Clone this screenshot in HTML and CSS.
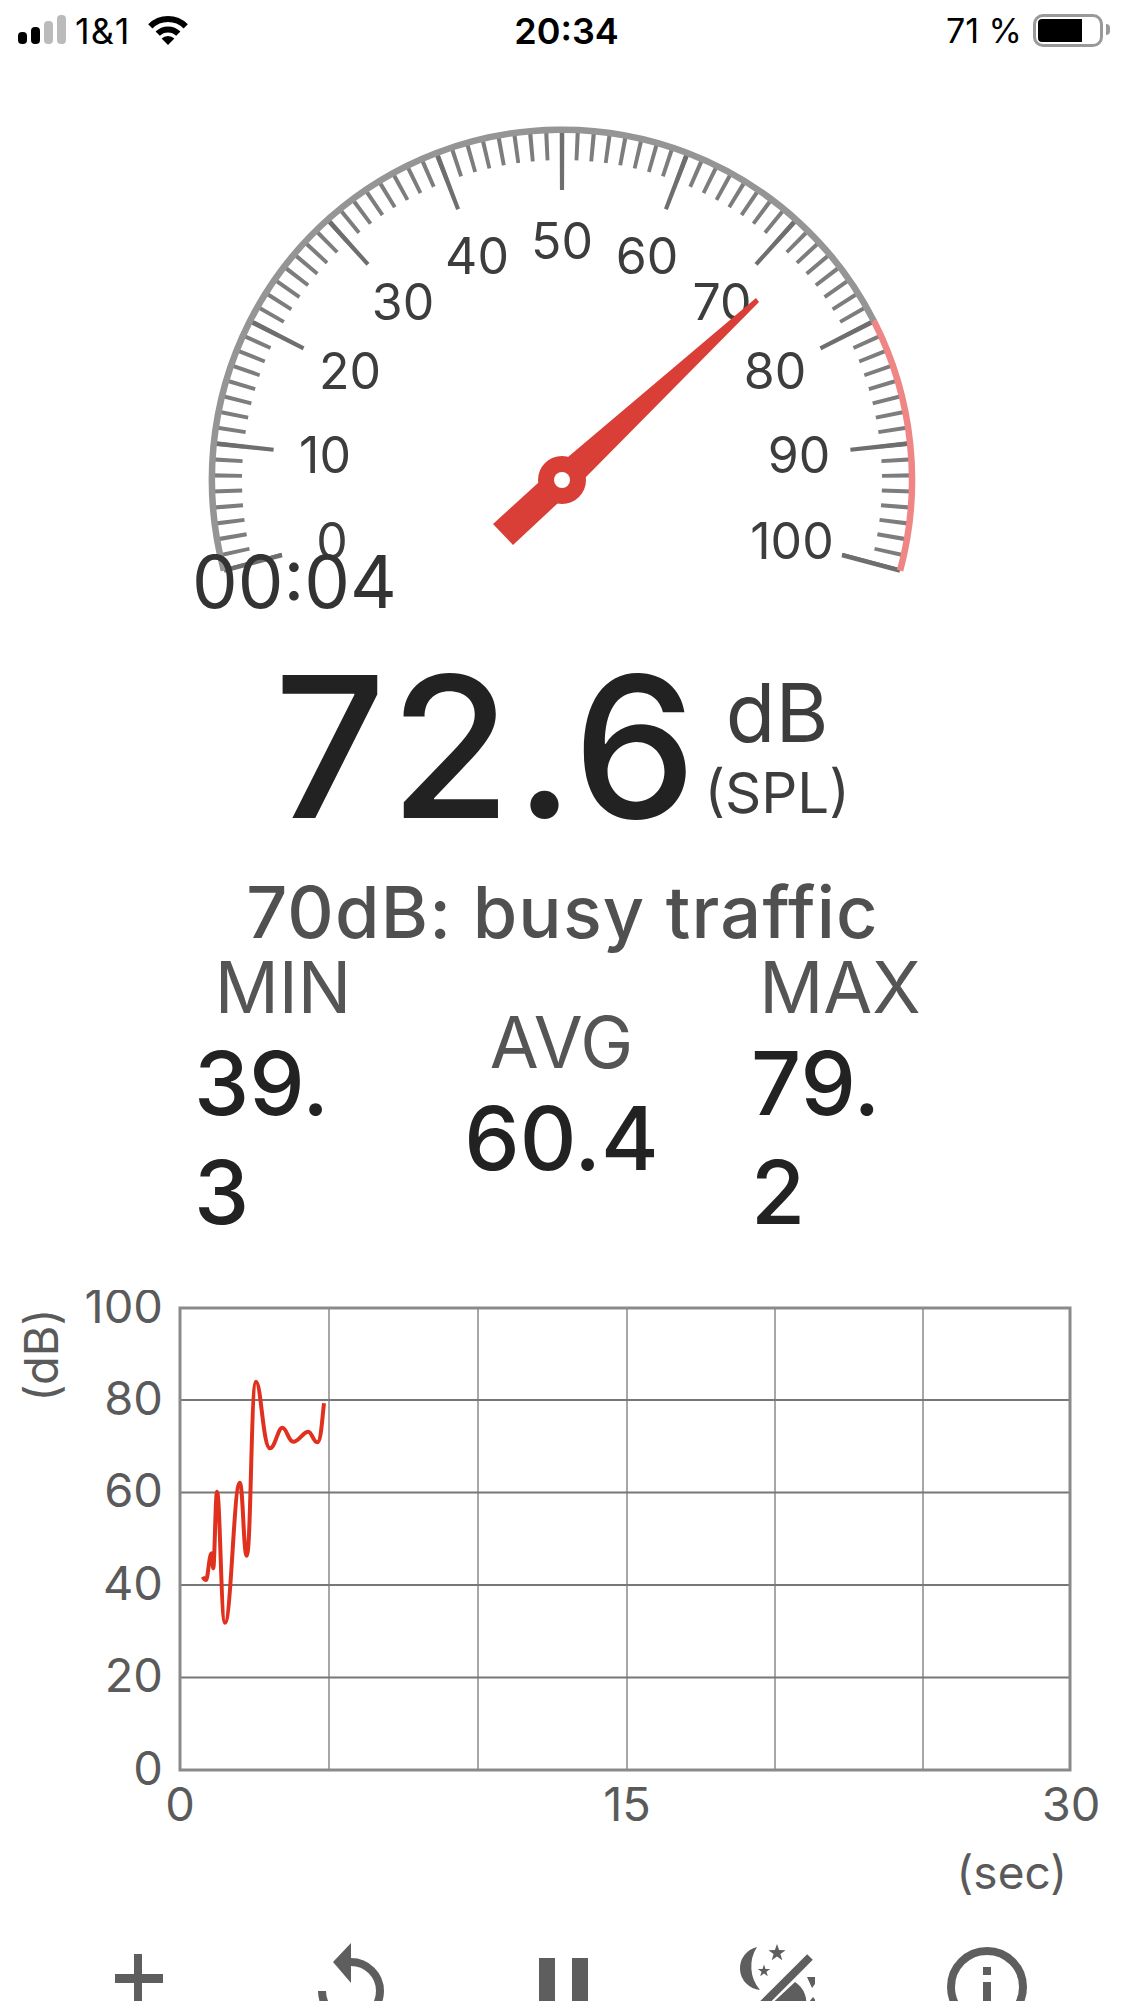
FILE: index.html
```html
<!DOCTYPE html>
<html lang="en">
<head>
    <meta charset="utf-8">
    <title>Sound Meter</title>
    <link rel="stylesheet" href="styles.css">
</head>
<body>
    <div class="status">
        <div class="status-left">
            <div class="signal"><i class="on b1"></i><i class="on b2"></i><i class="b3"></i><i class="b4"></i></div>
            <span class="carrier">1&amp;1</span>
            <svg class="wifi" viewBox="0 0 42 30" width="42" height="30">
                <path class="wifi-arc" d="M3.3 11.3 A25 25 0 0 1 38.7 11.3"/>
                <path class="wifi-arc" d="M10.7 18.7 A14.5 14.5 0 0 1 31.3 18.7"/>
                <path d="M21 30 L14.6 23.6 A9 9 0 0 1 27.4 23.6 Z"/>
            </svg>
        </div>
        <span class="clock">20:34</span>
        <div class="status-right">
            <span class="percent">71 %</span>
            <div class="battery"><div class="battery-fill"></div></div>
            <div class="battery-nub"></div>
        </div>
    </div>

    <svg class="gauge" viewBox="0 70 1125 530" width="1125" height="530">
        <path class="tick-minor" pathLength="80" d="M238.4 566.7 A335 335 0 1 1 885.6 566.7"/>
        <path class="tick-major" pathLength="10" d="M252.9 562.8 A320 320 0 1 1 871.1 562.8"/>
        <line class="tick-end" x1="282" y1="555" x2="224" y2="570.6"/>
        <line class="tick-end" x1="842" y1="555" x2="900" y2="570.6"/>
        <path class="arc" d="M223.9 570.6 A350 350 0 0 1 873.9 321.1"/>
        <path class="arc arc-hot" d="M873.9 321.1 A350 350 0 0 1 900.1 570.6"/>
        <text class="dial" x="332" y="559">0</text>
        <text class="dial" x="325" y="473">10</text>
        <text class="dial" x="350" y="389">20</text>
        <text class="dial" x="403" y="320">30</text>
        <text class="dial" x="477" y="274">40</text>
        <text class="dial" x="562" y="259">50</text>
        <text class="dial" x="647" y="274">60</text>
        <text class="dial" x="722" y="320">70</text>
        <text class="dial" x="775" y="389">80</text>
        <text class="dial" x="799" y="473">90</text>
        <text class="dial" x="792" y="559">100</text>
        <polygon class="needle" points="756,298 759,302 586,477 558,503 513,545 493,524 538,483 568,457"/>
        <circle class="needle" cx="562" cy="480" r="24"/>
        <circle class="hub" cx="562" cy="480" r="8"/>
    </svg>

    <div class="timer">00:04</div>

    <div class="reading">
        <div class="level">72.6</div>
        <div class="unit">
            <div class="unit-db">dB</div>
            <div class="unit-spl">(SPL)</div>
        </div>
    </div>

    <div class="hint">70dB: busy traffic</div>

    <div class="stats">
        <div class="stat">
            <div class="stat-label">MIN</div>
            <div class="stat-value">39.3</div>
        </div>
        <div class="stat stat-mid">
            <div class="stat-label">AVG</div>
            <div class="stat-value">60.4</div>
        </div>
        <div class="stat">
            <div class="stat-label">MAX</div>
            <div class="stat-value">79.2</div>
        </div>
    </div>

    <svg class="chart" viewBox="0 1290 1125 620" width="1125" height="620">
        <g class="grid-v">
            <line x1="329" y1="1308" x2="329" y2="1770"/>
            <line x1="478" y1="1308" x2="478" y2="1770"/>
            <line x1="627" y1="1308" x2="627" y2="1770"/>
            <line x1="775" y1="1308" x2="775" y2="1770"/>
            <line x1="923" y1="1308" x2="923" y2="1770"/>
        </g>
        <g class="grid-h">
            <line x1="180" y1="1400" x2="1070" y2="1400"/>
            <line x1="180" y1="1492.5" x2="1070" y2="1492.5"/>
            <line x1="180" y1="1585" x2="1070" y2="1585"/>
            <line x1="180" y1="1677.5" x2="1070" y2="1677.5"/>
        </g>
        <rect class="frame" x="180" y="1308" width="890" height="462"/>
        <text class="axis axis-y" x="163" y="1323">100</text>
        <text class="axis axis-y" x="163" y="1415">80</text>
        <text class="axis axis-y" x="163" y="1507">60</text>
        <text class="axis axis-y" x="163" y="1600">40</text>
        <text class="axis axis-y" x="163" y="1692">20</text>
        <text class="axis axis-y" x="163" y="1785">0</text>
        <text class="axis axis-x" x="180" y="1821">0</text>
        <text class="axis axis-x" x="627" y="1821">15</text>
        <text class="axis axis-x" x="1071" y="1821">30</text>
        <text class="axis axis-sec" x="1067" y="1889">(sec)</text>
        <text class="axis axis-db" transform="translate(58 1355) rotate(-90)">(dB)</text>
        <path class="trace" d="M202.7 1576.7 C204 1579 205 1580 206 1580 C208 1580 209 1553.3 211.7 1553.3 C212.3 1553.3 212.6 1568.3 213.3 1568.3 C214.5 1568.3 215.5 1491.7 217 1491.7 C220 1491.7 221 1622.7 225 1622.7 C231 1622.7 234 1482.7 239.7 1482.7 C243 1482.7 243.5 1555.7 246.7 1555.7 C251 1555.7 251 1381.7 256 1381.7 C261 1381.7 263 1448.3 270 1448.3 C275 1448.3 278 1427.7 282.3 1427.7 C287 1427.7 288 1441.7 293.3 1441.7 C299 1441.7 303 1431.7 308.3 1431.7 C312 1431.7 313 1442.3 317.3 1442.3 C321 1442.3 322 1420 324 1403.3"/>
    </svg>

    <div class="toolbar">
        <svg class="tool" viewBox="0 0 80 80" width="80" height="80">
            <rect x="35" y="14" width="8" height="66"/>
            <rect x="16" y="34" width="48" height="9"/>
        </svg>
        <svg class="tool" viewBox="0 0 80 80" width="80" height="80">
            <polygon points="22,22 40,3 40,43"/>
            <path class="tool-line" d="M40 22 A29 29 0 1 1 11 51"/>
        </svg>
        <svg class="tool" viewBox="0 0 80 80" width="80" height="80">
            <rect x="16" y="18" width="16" height="62"/>
            <rect x="49" y="18" width="16" height="62"/>
        </svg>
        <svg class="tool" viewBox="0 0 80 80" width="80" height="80">
            <path d="M22 7 A21.8 21.8 0 0 0 25 50 A36 36 0 0 1 22 7 Z"/>
            <polygon id="star" points="42,4 44.1,10.1 50.6,10.2 45.4,14.1 47.3,20.3 42,16.6 36.7,20.3 38.6,14.1 33.4,10.2 39.9,10.1"/>
            <use href="#star" transform="translate(29 31) scale(.72) translate(-42 -13)"/>
            <line class="tool-line" x1="75" y1="17" x2="20" y2="72"/>
            <path d="M60 42 A24 24 0 0 1 70 70 L30 70 Z"/>
            <polygon points="72,37 85,37 77,48"/>
            <polygon points="78,57 82,62 74,62"/>
        </svg>
        <svg class="tool" viewBox="0 0 80 80" width="80" height="80">
            <circle class="tool-line" cx="40" cy="47" r="36"/>
            <rect x="36" y="27" width="8" height="8"/>
            <rect x="36" y="42" width="8" height="30"/>
        </svg>
    </div>
</body>
</html>
```

FILE: styles.css
```css
html, body { margin: 0; padding: 0; background: #fff; }
body { width: 1125px; height: 2001px; overflow: hidden; font-family: Inter, "Liberation Sans", sans-serif; }
svg { display: block; }

/* status bar */
.status { display: grid; grid-template-columns: 1fr auto 1fr; height: 56px; padding: 14px 15px 0 18px; color: #000; font-size: 34px; line-height: 34px; }
.status-left { display: flex; align-items: flex-start; }
.status-right { display: flex; align-items: flex-start; justify-content: flex-end; }
.signal { display: flex; align-items: flex-end; gap: 4px; height: 30px; }
.signal i { display: block; width: 9px; background: #bbb; border-radius: 4px; }
.signal i.on { background: #000; }
.signal .b1 { height: 12px; }
.signal .b2 { height: 17px; }
.signal .b3 { height: 23px; }
.signal .b4 { height: 29px; }
.carrier { margin-left: 9px; font-size: 36px; letter-spacing: 1px; }
.wifi { margin: 1px 0 0 17px; }
.wifi-arc { fill: none; stroke: #000; stroke-width: 6; }
.clock { margin-left: 5px; font-size: 36px; font-weight: 600; }
.percent { margin-right: 11px; }
.battery { box-sizing: border-box; width: 70px; height: 33px; padding: 2px; border: 3px solid #999; border-radius: 10px; }
.battery-fill { width: 44px; height: 100%; background: #000; border-radius: 4px 0 0 4px; }
.battery-nub { width: 4px; height: 11px; margin: 10px 0 0 3px; background: #999; border-radius: 0 4px 4px 0; }

/* gauge */
.tick-minor { fill: none; stroke: #7d7d7d; stroke-width: 30; stroke-dasharray: .26 .74; stroke-dashoffset: .13; }
.tick-major { fill: none; stroke: #6e6e6e; stroke-width: 60; stroke-dasharray: .038 .962; stroke-dashoffset: .019; }
.tick-end { stroke: #6e6e6e; stroke-width: 4.5; }
.arc { fill: none; stroke: #959595; stroke-width: 6.5; }
.arc-hot { stroke: #ef8585; }
.dial { font-size: 50px; fill: #3d3d3d; text-anchor: middle; }
.needle { fill: #d93e37; }
.hub { fill: #fff; }

.timer { margin-top: -54px; padding-left: 192px; font-size: 72.5px; line-height: 72px; color: #333; }

/* current level */
.reading { display: flex; margin-top: 31px; padding-left: 274px; }
.level { font-size: 196px; line-height: 196px; font-weight: 500; letter-spacing: 4px; color: #222; }
.unit { margin: 25px 0 0 4px; text-align: center; color: #3d3d3d; }
.unit-db { font-size: 81px; line-height: 79px; }
.unit-spl { font-size: 56.5px; line-height: 79px; }

.hint { margin-top: 31px; font-size: 72px; line-height: 72px; font-weight: 500; letter-spacing: 1.2px; text-align: center; color: #505050; }

/* min / avg / max */
.stats { display: grid; grid-template-columns: 172px 385px 172px; align-items: center; margin-top: 3px; padding-left: 197px; }
.stat-label { margin-bottom: 6px; font-size: 71px; line-height: 72px; text-align: center; color: #555; white-space: nowrap; }
.stat-value { margin-left: -3px; font-size: 88px; line-height: 109px; font-weight: 500; color: #222; word-break: break-all; }
.stat-mid .stat-value { margin-left: 0; text-align: center; }

/* history chart */
.chart { margin-top: 43px; }
.grid-v line { stroke: #8a8a8a; stroke-width: 1.5; }
.grid-h line { stroke: #777; stroke-width: 2; }
.frame { fill: none; stroke: #8a8a8a; stroke-width: 3; }
.axis { font-size: 47px; fill: #5a5a5a; }
.axis-y { text-anchor: end; }
.axis-x { text-anchor: middle; }
.axis-sec { font-size: 46px; text-anchor: end; }
.axis-db { font-size: 47px; text-anchor: middle; }
.trace { fill: none; stroke: #e0301e; stroke-width: 4; stroke-linejoin: round; }

/* bottom toolbar */
.toolbar { display: flex; gap: 132px; margin-top: 30px; padding-left: 99px; }
.tool { flex: none; fill: #5e5e5e; }
.tool-line { fill: none; stroke: #5e5e5e; stroke-width: 8; }
```
